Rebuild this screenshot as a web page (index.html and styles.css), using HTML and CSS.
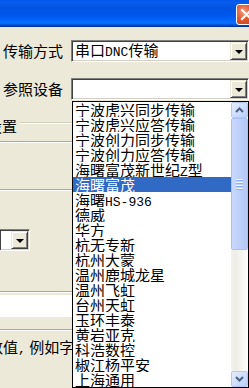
FILE: index.html
```html
<!DOCTYPE html>
<html>
<head>
<meta charset="utf-8">
<link rel="stylesheet" href="styles.css">
</head>
<body>
<div class="win">
  <div class="title">
    <div class="close">
      <svg width="13" height="13" viewBox="0 0 13 13"><path d="M2 2 L11 11 M11 2 L2 11" stroke="#fff" stroke-width="2.2" stroke-linecap="square"/></svg>
    </div>
  </div>
  <div class="content">
    <div class="row">
      <span class="lbl">传输方式</span>
      <div class="combo">
        <span class="val">串口<span class="lat">DNC</span>传输</span>
        <div class="btn"><i class="tri"></i></div>
      </div>
    </div>
    <div class="row row2">
      <span class="lbl">参照设备</span>
      <div class="combo">
        <span class="val"></span>
        <div class="btn"><i class="tri"></i></div>
      </div>
    </div>
    <div class="grp">
      <span class="gt">设置</span>
      <div class="etch"></div>
    </div>
    <div class="hline l1"></div>
    <div class="hline l2"></div>
    <div class="combo small">
      <span class="val"></span>
      <div class="btn"><i class="tri"></i></div>
    </div>
    <div class="hline l3"></div>
    <div class="edit"></div>
    <div class="hline l4"></div>
    <div class="note">数值<span class="lat">,</span> 例如字符</div>
  </div>
  <div class="list">
    <ul class="items">
      <li>宁波虎兴同步传输</li>
      <li>宁波虎兴应答传输</li>
      <li>宁波创力同步传输</li>
      <li>宁波创力应答传输</li>
      <li>海曙富茂新世纪<span class="lat">Z</span>型</li>
      <li class="sel">海曙富茂</li>
      <li>海曙<span class="lat">HS-936</span></li>
      <li>德威</li>
      <li>华方</li>
      <li>杭无专新</li>
      <li>杭州大蒙</li>
      <li>温州鹿城龙星</li>
      <li>温州飞虹</li>
      <li>台州天虹</li>
      <li>玉环丰泰</li>
      <li>黄岩亚克</li>
      <li>科浩数控</li>
      <li>椒江杨平安</li>
      <li>上海通用</li>
    </ul>
    <div class="sbar">
      <div class="sbtn"><svg width="9" height="6" viewBox="0 0 9 6"><path d="M1 5 L4.5 1.5 L8 5" fill="none" stroke="#4D6185" stroke-width="2"/></svg></div>
      <div class="thumb"><div class="grip"><i></i><i></i><i></i><i></i></div></div>
      <div class="track"></div>
      <div class="sbtn"><svg width="9" height="6" viewBox="0 0 9 6"><path d="M1 1 L4.5 4.5 L8 1" fill="none" stroke="#4D6185" stroke-width="2"/></svg></div>
    </div>
  </div>
</div>
</body>
</html>
```

FILE: styles.css
```css
html, body {
  margin: 0;
  padding: 0;
}
body {
  width: 249px;
  height: 388px;
  overflow: hidden;
  background: #ECE9D8;
  font-family: "Noto Sans CJK SC", sans-serif;
  font-size: 15px;
  color: #000;
}
.win {
  position: relative;
  width: 249px;
  height: 388px;
  overflow: hidden;
}
.title {
  height: 27px;
  box-sizing: border-box;
  padding-top: 4px;
  display: flex;
  justify-content: flex-end;
  align-items: flex-start;
  background: linear-gradient(to bottom, #0058EE 0%, #0A5CE8 10%, #0054E3 30%, #0055EB 55%, #005BF5 66%, #026AFE 78%, #0A6FFF 86%, #0052D6 92%, #0040AB 96%, #003092 100%);
}
.close {
  width: 21px;
  height: 21px;
  box-sizing: border-box;
  margin-right: -8px;
  border: 1px solid #fff;
  border-radius: 3px;
  background: radial-gradient(circle at 35% 35%, #F09A80 0%, #E2592F 45%, #C53D1C 100%);
  display: flex;
  align-items: center;
  justify-content: center;
}
.content {
  padding-top: 13px;
}
.row {
  display: flex;
  align-items: center;
  height: 22px;
}
.row2 {
  margin-top: 16px;
}
.lbl {
  width: 72px;
  padding-left: 3px;
  box-sizing: border-box;
  line-height: 22px;
  white-space: nowrap;
}
.lat {
  font-family: "Liberation Mono", monospace;
  font-size: 13px;
}
.combo {
  width: 178px;
  height: 22px;
  flex: none;
  box-sizing: border-box;
  background: #fff;
  border: 1px solid;
  border-color: #808080 #fff #fff #808080;
  box-shadow: inset 1px 1px #404040, inset -1px -1px #D4D0C8;
  display: flex;
  align-items: center;
  justify-content: space-between;
  padding: 1px;
}
.val {
  padding-left: 2px;
  line-height: 18px;
  white-space: nowrap;
}
.btn {
  width: 17px;
  height: 18px;
  box-sizing: border-box;
  background: #ECE9D8;
  border: 1px solid;
  border-color: #ECE9D8 #404040 #404040 #ECE9D8;
  box-shadow: inset 1px 1px #fff, inset -1px -1px #808080;
  display: flex;
  align-items: center;
  justify-content: center;
}
.tri {
  width: 0;
  height: 0;
  border-left: 4px solid transparent;
  border-right: 4px solid transparent;
  border-top: 4px solid #000;
  margin-top: 1px;
}
.grp {
  margin-top: 18px;
  height: 15px;
  display: flex;
  align-items: flex-start;
  line-height: 15px;
}
.gt {
  margin-left: -13px;
  white-space: nowrap;
}
.etch {
  flex: 1;
  margin-top: 4px;
  margin-left: 3px;
  border-top: 1px solid #D0D0BF;
  border-bottom: 1px solid #fff;
}
.hline {
  height: 0;
  border-top: 1px solid #ACA899;
  border-bottom: 1px solid #fff;
}
.l1 { margin-top: 8px; }
.l2 { margin-top: 46px; }
.combo.small {
  width: 31px;
  margin-left: -1px;
  margin-top: 38px;
}
.l3 { margin-top: 40px; }
.edit {
  margin-top: 2px;
  height: 22px;
  background: #fff;
}
.l4 { margin-top: 12px; }
.note {
  margin-top: 8px;
  margin-left: -12px;
  line-height: 15px;
  white-space: nowrap;
}
.list {
  position: absolute;
  left: 72px;
  top: 101px;
  width: 177px;
  height: 287px;
  box-sizing: border-box;
  border: 1px solid #000;
  background: #fff;
  display: flex;
}
.items {
  list-style: none;
  margin: 0;
  padding: 0;
  flex: 1;
}
.items li {
  height: 15px;
  line-height: 15px;
  padding-left: 2px;
  white-space: nowrap;
  overflow: hidden;
}
.items li.sel {
  background: #316AC5;
  color: #fff;
}
.sbar {
  width: 17px;
  flex: none;
  display: flex;
  flex-direction: column;
}
.sbtn {
  height: 16px;
  box-sizing: border-box;
  border: 1px solid #B4C8F6;
  border-radius: 2px;
  background: linear-gradient(135deg, #E5EEFD, #B9CEFA);
  display: flex;
  align-items: center;
  justify-content: center;
}
.thumb {
  height: 132px;
  box-sizing: border-box;
  border: 1px solid #A9C0F5;
  border-radius: 2px;
  background: linear-gradient(to right, #C9D8FC, #BED0FA 50%, #B4C8F6);
  display: flex;
  align-items: center;
  justify-content: center;
}
.grip {
  display: flex;
  flex-direction: column;
  gap: 1px;
}
.grip i {
  display: block;
  width: 7px;
  height: 1px;
  background: #EEF4FE;
  border-bottom: 1px solid #8CB0F8;
}
.track {
  flex: 1;
  background: linear-gradient(to right, #F3F1EC 0%, #EEEDE5 30%, #F6F5F1 60%, #FDFDFA 100%);
}
```
